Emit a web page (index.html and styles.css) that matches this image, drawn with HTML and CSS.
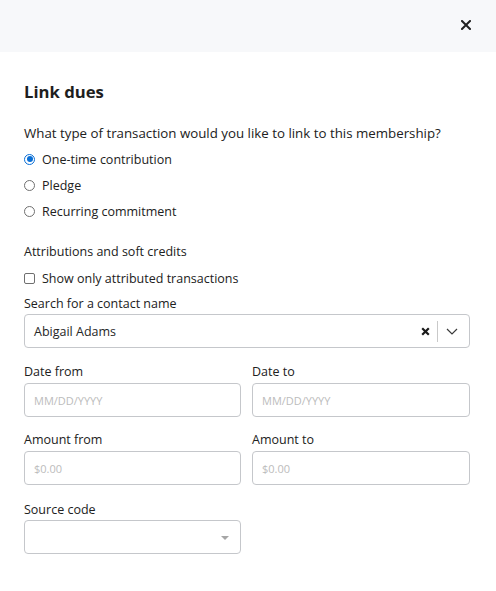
FILE: index.html
```html
<!DOCTYPE html>
<html lang="en">
<head>
<meta charset="utf-8">
<title>Link dues</title>
<link rel="stylesheet" href="styles.css">
</head>
<body>
<div class="modal">
  <header class="modal-header">
    <button class="close" aria-label="Close">
      <svg width="10" height="10" viewBox="0 0 10 10"><path d="M1 1L9 9M9 1L1 9" stroke="#212121" stroke-width="2" stroke-linecap="square"/></svg>
    </button>
  </header>
  <main class="modal-body">
    <h1 class="title">Link dues</h1>
    <p class="question">What type of transaction would you like to link to this membership?</p>
    <div class="options">
      <label class="option"><span class="radio checked"></span>One-time contribution</label>
      <label class="option"><span class="radio"></span>Pledge</label>
      <label class="option"><span class="radio"></span>Recurring commitment</label>
    </div>
    <p class="section-label">Attributions and soft credits</p>
    <label class="option"><span class="checkbox"></span>Show only attributed transactions</label>

    <div class="field first">
      <div class="label">Search for a contact name</div>
      <div class="input combo">
        <span class="value">Abigail Adams</span>
        <span class="clear">
          <svg width="9" height="9" viewBox="0 0 9 9"><path d="M1.2 1.2L7.8 7.8M7.8 1.2L1.2 7.8" stroke="#1a1a1a" stroke-width="2.2"/></svg>
        </span>
        <span class="sep"></span>
        <span class="chev">
          <svg width="12" height="7" viewBox="0 0 12 7"><path d="M1 1L6 6L11 1" fill="none" stroke="#3a3a3a" stroke-width="1.2"/></svg>
        </span>
      </div>
    </div>

    <div class="row row-dates">
      <div class="field">
        <div class="label">Date from</div>
        <div class="input"><span class="ph">MM/DD/YYYY</span></div>
      </div>
      <div class="field">
        <div class="label">Date to</div>
        <div class="input"><span class="ph">MM/DD/YYYY</span></div>
      </div>
    </div>

    <div class="row">
      <div class="field">
        <div class="label">Amount from</div>
        <div class="input"><span class="ph">$0.00</span></div>
      </div>
      <div class="field">
        <div class="label">Amount to</div>
        <div class="input"><span class="ph">$0.00</span></div>
      </div>
    </div>

    <div class="row row-source">
      <div class="field">
        <div class="label">Source code</div>
        <div class="input select"><span class="caret"></span></div>
      </div>
      <div class="field"></div>
    </div>
  </main>
</div>
</body>
</html>
```

FILE: styles.css
```css
* { box-sizing: border-box; }
html, body { margin: 0; padding: 0; background: #fff; }
body {
  font-family: "Open Sans", "Noto Sans", "Liberation Sans", sans-serif;
  font-size: 12.5px;
  color: #212121;
}
.modal { width: 496px; }
.modal-header {
  height: 52px;
  background: #f7f8fa;
  display: flex;
  justify-content: flex-end;
  align-items: center;
  padding-right: 25px;
}
.close {
  border: 0;
  background: transparent;
  padding: 0;
  width: 10px;
  height: 10px;
  display: flex;
  margin-top: -2px;
}
.modal-body {
  padding: 0 26px 0 24px;
  display: flex;
  flex-direction: column;
}
.title {
  margin: 28px 0 0;
  font-size: 16.7px;
  line-height: 24px;
  font-weight: 700;
  color: #1e1e1e;
}
.question {
  margin: 19px 0 0;
  line-height: 20px;
  font-size: 13.3px;
}
.options { margin-top: 3px; display: flex; flex-direction: column; }
.option {
  height: 26px;
  display: flex;
  align-items: center;
  gap: 7px;
}
.radio {
  width: 11px;
  height: 11px;
  border-radius: 50%;
  border: 1px solid #6f6f6f;
  display: inline-block;
  position: relative;
}
.radio.checked {
  border-color: #0a6fd6;
  background: #fff;
}
.radio.checked::after {
  content: "";
  position: absolute;
  left: 1.5px; top: 1.5px;
  width: 6px; height: 6px;
  border-radius: 50%;
  background: #0a6fd6;
}
.section-label { margin: 18px 0 3px; line-height: 20px; }
.checkbox {
  width: 11px;
  height: 11px;
  border: 1px solid #6f6f6f;
  border-radius: 2px;
  display: inline-block;
}
.field { display: flex; flex-direction: column; }
.field.first { margin-top: 3px; }
.label { line-height: 20px; margin-bottom: 1px; }
.field.first .label { margin-bottom: 0; }
.row {
  display: grid;
  grid-template-columns: 217px 218px;
  column-gap: 11px;
  margin-top: 13px;
}
.row.row-dates { margin-top: 14px; }
.row.row-source { margin-top: 14px; }
.row-source .label { margin-bottom: 0; line-height: 21px; }
.input {
  height: 34px;
  border: 1px solid #c5c7cb;
  border-radius: 4px;
  display: flex;
  align-items: center;
  padding: 0 9px;
  background: #fff;
}
.ph { color: #bcbcbc; font-size: 11px; }
.combo .value { flex: 1; color: #262626; }
.combo .clear { display: flex; margin-right: 7px; }
.combo .sep { width: 1px; height: 21px; background: #c9c9c9; margin-right: 8px; }
.combo .chev { display: flex; margin-right: 2px; }
.select { justify-content: flex-end; padding-right: 11px; }
.caret {
  width: 0; height: 0;
  border-left: 4.5px solid transparent;
  border-right: 4.5px solid transparent;
  border-top: 4px solid #a6a6a6;
  margin-top: 2px;
}
```
